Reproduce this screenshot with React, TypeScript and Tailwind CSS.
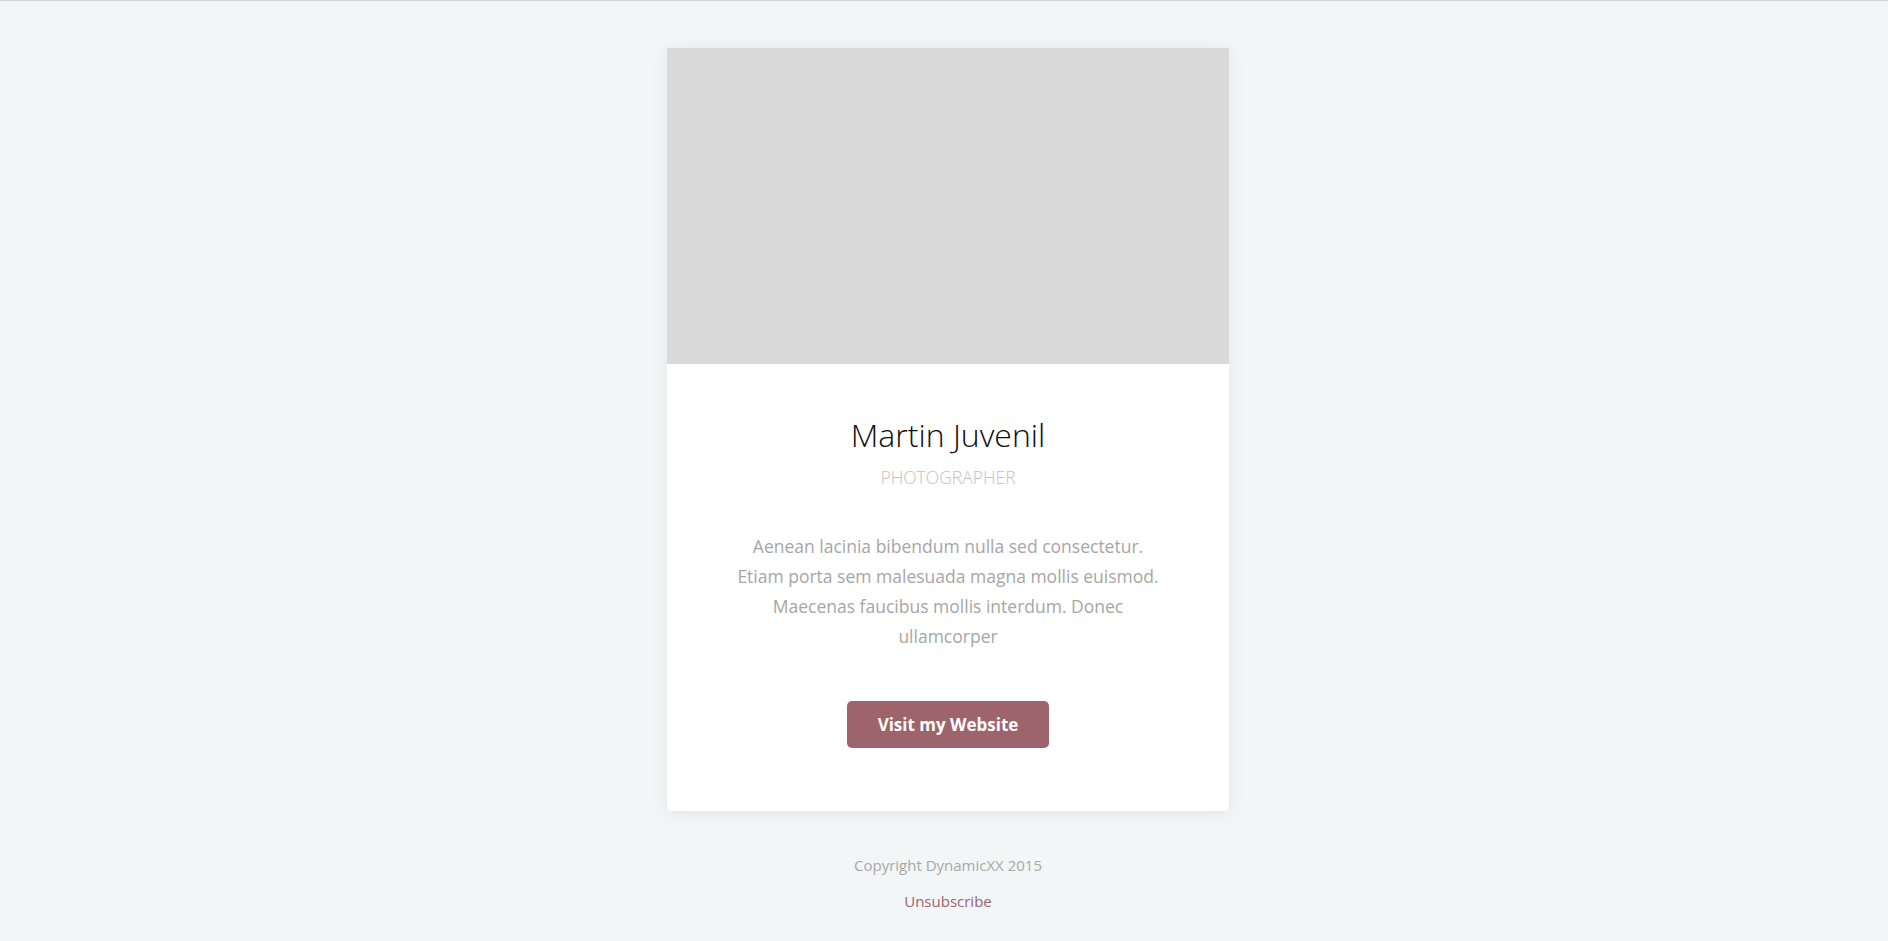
import React from 'react';

const ACCENT = '#9e646c';

const ProfileCard: React.FC = () => {
  return (
    <div className="w-[562px] bg-white rounded-b-[4px] shadow-[0_2px_18px_rgba(0,0,0,0.07)]">
      {/* Cover placeholder */}
      <div className="h-[316px] bg-[#d9d9d9]" />

      {/* Body */}
      <div className="flex flex-col items-center text-center pt-[52px] pb-[63px]">
        <h1 className="text-[32px] leading-[38px] font-light text-[#0d0d0d]">Martin Juvenil</h1>
        <p className="mt-[11px] text-[17.5px] leading-[24px] font-light uppercase text-[#c2c2c2]">Photographer</p>

        <p className="mt-[42px] w-[430px] text-[17.5px] leading-[30px] text-[#a6a6a6]">
          Aenean lacinia bibendum nulla sed consectetur. Etiam porta sem malesuada magna mollis euismod. Maecenas
          faucibus mollis interdum. Donec ullamcorper
        </p>

        <a
          href="#"
          className="mt-[50px] flex items-center justify-center w-[202px] h-[47px] rounded-[5px] bg-[#9e646c] text-white text-[17px] font-bold"
        >
          Visit my Website
        </a>
      </div>
    </div>
  );
};

const App: React.FC = () => {
  return (
    <div
      className="min-h-screen bg-[#f2f6f7] border-t border-[#d2d2d2] flex flex-col items-center pl-[8px] pt-[47px]"
      style={{ fontFamily: '"Open Sans", "Liberation Sans", sans-serif' }}
    >
      <ProfileCard />

      {/* Footer */}
      <div className="mt-[44px] flex flex-col items-center gap-[16px] text-[15px] leading-[20px]">
        <span className="text-[#a8a8a8]">Copyright DynamicXX 2015</span>
        <a href="#" style={{ color: ACCENT }}>
          Unsubscribe
        </a>
      </div>
    </div>
  );
};

export default App;
